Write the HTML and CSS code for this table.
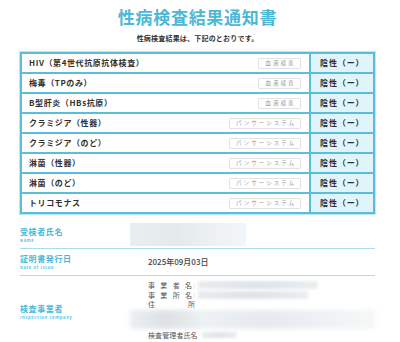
FILE: index.html
```html
<!DOCTYPE html>
<html lang="ja">
<head>
<meta charset="utf-8">
<link rel="stylesheet" href="styles.css">
</head>
<body>
<div class="page">
  <h1 class="title">性病検査結果通知書</h1>
  <p class="lead">性病検査結果は、下記のとおりです。</p>
  <table class="results">
    <tr><td class="name"><div class="cell"><span>HIV（第4世代抗原抗体検査）</span><span class="badge">血液検査</span></div></td><td class="res">陰性（ー）</td></tr>
    <tr><td class="name"><div class="cell"><span>梅毒（TPのみ）</span><span class="badge">血液検査</span></div></td><td class="res">陰性（ー）</td></tr>
    <tr><td class="name"><div class="cell"><span>B型肝炎（HBs抗原）</span><span class="badge">血液検査</span></div></td><td class="res">陰性（ー）</td></tr>
    <tr><td class="name"><div class="cell"><span>クラミジア（性器）</span><span class="badge">パンサーシステム</span></div></td><td class="res">陰性（ー）</td></tr>
    <tr><td class="name"><div class="cell"><span>クラミジア（のど）</span><span class="badge">パンサーシステム</span></div></td><td class="res">陰性（ー）</td></tr>
    <tr><td class="name"><div class="cell"><span>淋菌（性器）</span><span class="badge">パンサーシステム</span></div></td><td class="res">陰性（ー）</td></tr>
    <tr><td class="name"><div class="cell"><span>淋菌（のど）</span><span class="badge">パンサーシステム</span></div></td><td class="res">陰性（ー）</td></tr>
    <tr><td class="name"><div class="cell"><span>トリコモナス</span><span class="badge">パンサーシステム</span></div></td><td class="res">陰性（ー）</td></tr>
  </table>

  <div class="info info-name">
    <div class="label"><div class="ja">受検者氏名</div><div class="en">Name</div></div>
    <div class="value"><div class="blur-box"></div></div>
  </div>
  <div class="info info-date">
    <div class="label"><div class="ja">証明書発行日</div><div class="en">Date of issue</div></div>
    <div class="value date">2025年09月03日</div>
  </div>
  <div class="info info-company">
    <div class="label label-company"><div class="ja">検査事業者</div><div class="en">Inspection company</div></div>
    <div class="value company">
      <div class="line"><span class="key">事業者名</span><span class="slash">/</span><span class="blur blur-a"></span></div>
      <div class="line"><span class="key">事業所名</span><span class="slash">/</span><span class="blur blur-b"></span></div>
      <div class="line"><span class="key key-wide">住　所</span></div>
      <div class="band"></div>
      <div class="line"><span class="key2">検査管理者氏名</span><span class="blur blur-c"></span></div>
    </div>
  </div>
</div>
</body>
</html>
```

FILE: styles.css
```css
* { box-sizing: border-box; }
html, body { margin: 0; padding: 0; background: #fff; }
body {
  font-family: "Noto Sans CJK JP", "Noto Sans", sans-serif;
  color: #333;
}
.page {
  width: 355px;
  margin-left: 20px;
}
.title {
  margin: 5px 0 0;
  font-size: 17px;
  line-height: 24px;
  font-weight: 700;
  letter-spacing: 0.7px;
  text-align: center;
  color: #4cb8d8;
}
.lead {
  margin: 4px 0 0;
  font-size: 7px;
  line-height: 10px;
  font-weight: 700;
  letter-spacing: 0.2px;
  text-align: center;
  color: #333;
}
.results {
  margin-top: 9px;
  width: 355px;
  border-collapse: collapse;
  border: 2px solid #7ccbe3;
  box-shadow: 0 0 0 1px #c2e7f3;
}
.results td {
  height: 20px;
  padding: 0;
  border: 2px solid #5bbddc;
  font-size: 8px;
  font-weight: 700;
  line-height: 10px;
  letter-spacing: 0.6px;
  color: #2f2f2f;
}
.results td.name { padding: 0 8px 0 7px; }
.cell {
  display: flex;
  justify-content: space-between;
  align-items: center;
}
.badge {
  display: inline-block;
  font-size: 5.5px;
  line-height: 9px;
  font-weight: 400;
  letter-spacing: 2px;
  color: #9a9a9a;
  border: 1px solid #e2e2e2;
  border-radius: 1px;
  padding: 0 4px 0 6px;
  min-width: 43px;
  text-align: center;
}
.results td.res {
  width: 64px;
  background: #dff4fb;
  padding-left: 9px;
  letter-spacing: 0.9px;
}
.info {
  display: grid;
  grid-template-columns: 110px 1fr;
  align-items: center;
  border-bottom: 1px solid #a9dcee;
}
.info-name { height: 35px; padding-top: 7px; }
.info-date { height: 27px; }
.info-company { height: 68px; border-bottom: none; }
.label-company { margin-top: 4px; }
.label .ja {
  font-size: 8px;
  line-height: 10px;
  font-weight: 700;
  letter-spacing: 0.6px;
  color: #4cb8d8;
}
.label .en {
  font-size: 4px;
  line-height: 6px;
  font-weight: 700;
  letter-spacing: 0.7px;
  color: #58bfdd;
}
.value { padding-left: 18px; }
.blur-box {
  margin-left: -18px;
  width: 116px;
  height: 23px;
  background: linear-gradient(90deg, #e9eef1 0%, #e4e9ec 40%, #eef2f4 75%, #f3f6f8 100%);
  filter: blur(0.6px);
}
.date {
  font-size: 8px;
  line-height: 10px;
  font-weight: 500;
  color: #444;
}
.company { font-size: 7px; color: #555; }
.line {
  display: flex;
  align-items: center;
  height: 9.5px;
}
.key {
  width: 44px;
  text-align-last: justify;
  letter-spacing: 0;
  white-space: nowrap;
}
.key-wide { width: 47px; }
.key2 { white-space: nowrap; letter-spacing: 0.1px; }
.slash { color: #ccc; font-size: 6px; margin-left: 1px; }
.blur {
  display: inline-block;
  height: 8px;
  background: linear-gradient(90deg, #e9ecee, #dfe3e6 50%, #ebeef0);
  filter: blur(1.5px);
  margin-left: 3px;
}
.blur-a { width: 120px; }
.blur-b { width: 110px; }
.blur-c { width: 35px; margin-left: 4px; height: 6px; }
.band {
  margin-left: -18px;
  height: 19px;
  margin-top: 1px;
  margin-bottom: 1px;
  background: linear-gradient(90deg, #eceff1 0%, #dde1e4 15%, #eef1f3 30%, #e7eaec 55%, #eff2f4 80%, #f5f7f8 100%);
  filter: blur(2px);
}
```
